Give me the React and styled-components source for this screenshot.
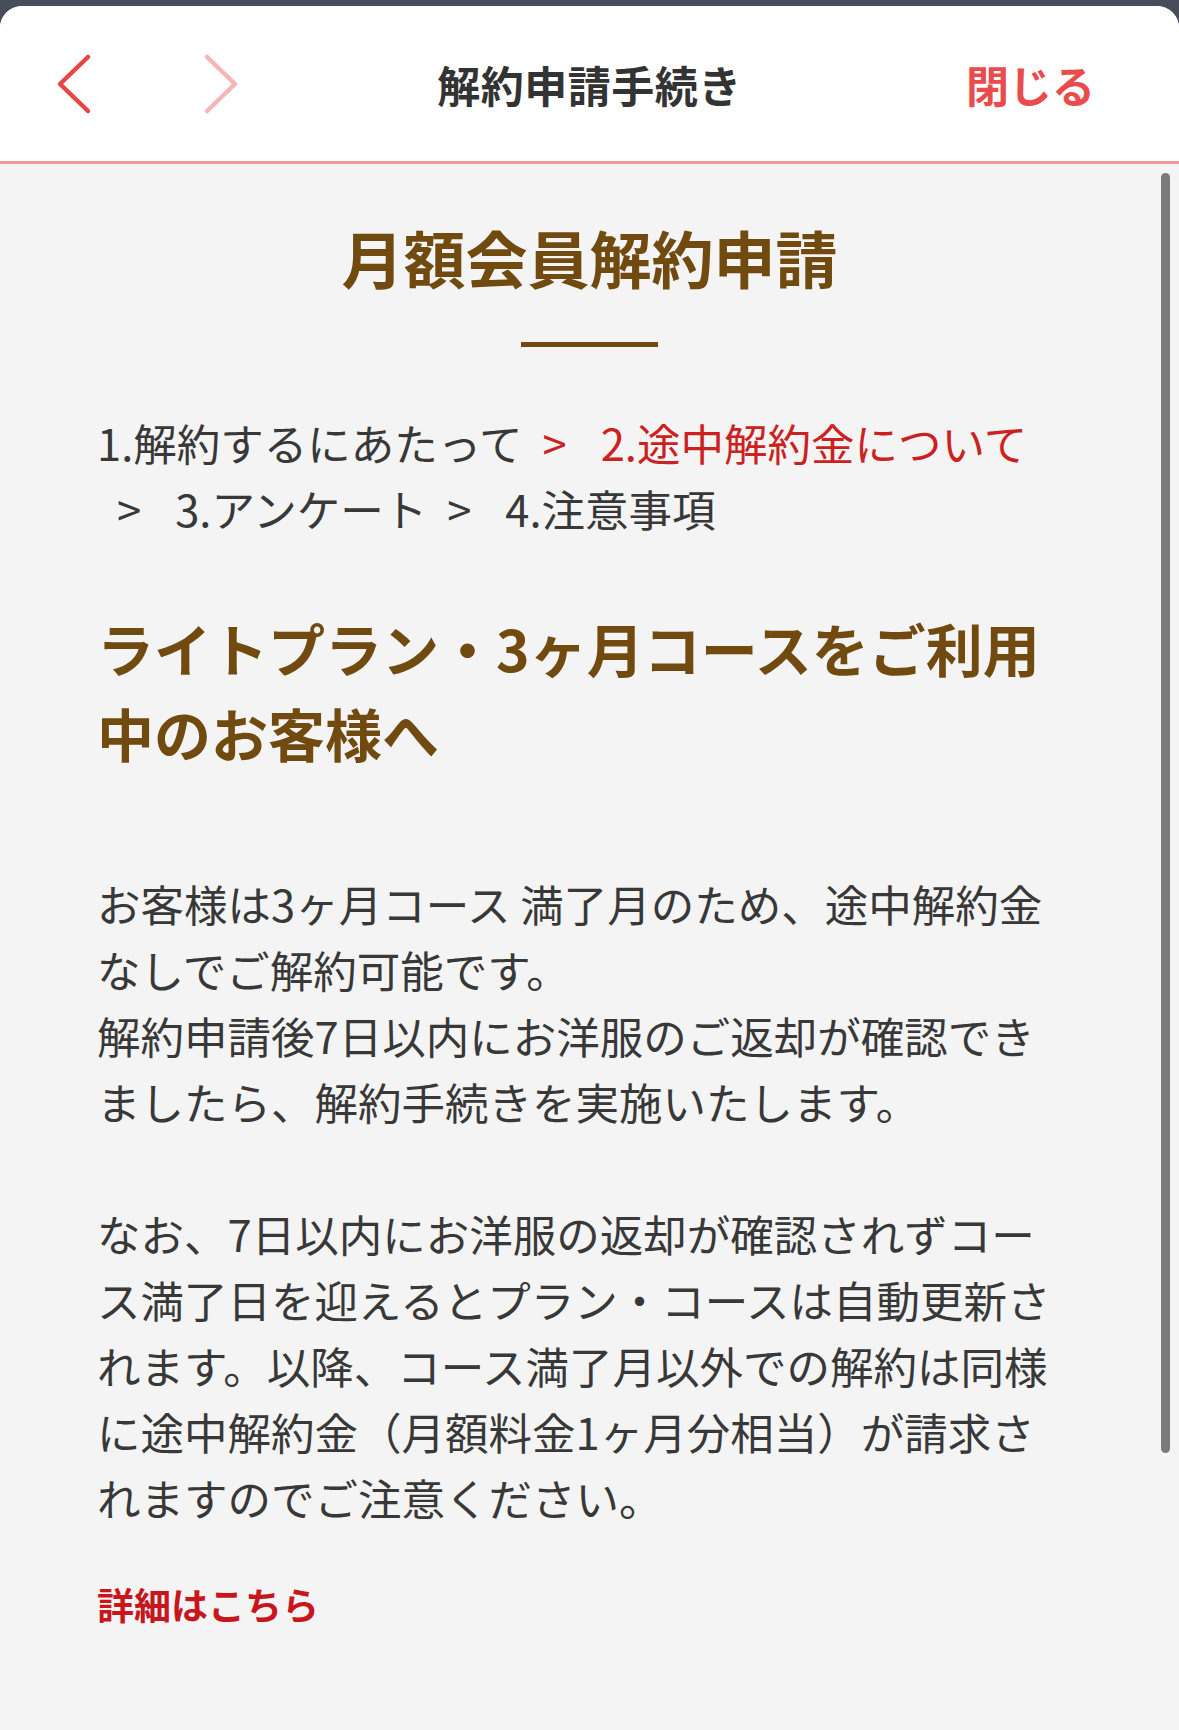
import React from 'react';
import styled, { createGlobalStyle } from 'styled-components';

const GlobalStyle = createGlobalStyle`
  html, body {
    margin: 0;
    padding: 0;
    background: #474e5a;
  }
  body {
    font-family: "Noto Sans CJK JP", "Noto Sans", sans-serif;
    color: #383838;
  }
  * { box-sizing: border-box; }
`;

const Sheet = styled.div`
  position: relative;
  margin-top: 6px;
  min-height: 1724px;
  background: #f4f4f4;
  border-radius: 22px 22px 0 0;
  overflow: hidden;
`;

const Header = styled.header`
  display: grid;
  grid-template-columns: 1fr auto 1fr;
  align-items: center;
  height: 158px;
  background: #fff;
  border-bottom: 3px solid #ef9a9d;
`;

const NavGroup = styled.div`
  display: flex;
  align-items: center;
  gap: 107px;
  padding-left: 54px;
`;

const NavButton = styled.button`
  display: flex;
  align-items: center;
  justify-content: center;
  width: 40px;
  height: 64px;
  padding: 0;
  border: none;
  background: none;
  color: ${p => (p.$disabled ? '#f7b6b6' : '#e84545')};
`;

const HeaderTitle = styled.h1`
  margin: 0;
  font-size: 43px;
  font-weight: 700;
  color: #333;
  letter-spacing: 0.5px;
`;

const CloseButton = styled.button`
  justify-self: end;
  margin-right: 84px;
  padding: 0;
  border: none;
  background: none;
  font-family: inherit;
  font-size: 43px;
  font-weight: 700;
  color: #ea4b4b;
`;

const Scrollbar = styled.div`
  position: absolute;
  top: 167px;
  right: 9px;
  width: 9px;
  height: 1280px;
  border-radius: 5px;
  background: #7b7b7b;
`;

const PageTitle = styled.h2`
  margin: 50px 0 0;
  text-align: center;
  font-size: 62px;
  line-height: 87px;
  font-weight: 700;
  color: #714a10;
`;

const Divider = styled.div`
  width: 137px;
  height: 5px;
  margin: 41px auto 0;
  background: #714a10;
`;

const Content = styled.div`
  padding: 63px 114px 60px 97px;
`;

const Steps = styled.nav`
  font-size: 43.5px;
  line-height: 66px;
`;

const Step = styled.span`
  display: inline-block;
  white-space: nowrap;
  color: ${p => (p.$current ? '#cc2121' : '#383838')};
`;

const Sep = styled.span`
  display: inline-block;
  padding: 0 34px 0 20px;
`;

const Heading = styled.h3`
  margin: 63px 0 0;
  font-size: 57px;
  line-height: 85px;
  font-weight: 700;
  color: #714a10;
`;

const Paragraph = styled.p`
  margin: 96px 0 0;
  font-size: 43.5px;
  line-height: 66px;
  color: #383838;
`;

const DetailLink = styled.a`
  display: block;
  margin-top: 46px;
  font-size: 37px;
  line-height: 54px;
  font-weight: 700;
  color: #c8161d;
  text-decoration: none;
`;

const Chevron = ({ dir }) => (
  <svg width="40" height="64" viewBox="0 0 40 64" fill="none">
    <path
      d={dir === 'left' ? 'M34 5 L6 32 L34 59' : 'M6 5 L34 32 L6 59'}
      stroke="currentColor"
      strokeWidth="4.5"
      strokeLinecap="round"
      strokeLinejoin="round"
    />
  </svg>
);

const steps = [
  { id: 1, label: '1.解約するにあたって' },
  { id: 2, label: '2.途中解約金について', current: true },
  { id: 3, label: '3.アンケート' },
  { id: 4, label: '4.注意事項' },
];

export default function App() {
  return (
    <>
      <GlobalStyle />
      <Sheet>
        <Header>
          <NavGroup>
            <NavButton aria-label="戻る">
              <Chevron dir="left" />
            </NavButton>
            <NavButton $disabled aria-label="進む">
              <Chevron dir="right" />
            </NavButton>
          </NavGroup>
          <HeaderTitle>解約申請手続き</HeaderTitle>
          <CloseButton>閉じる</CloseButton>
        </Header>

        <PageTitle>月額会員解約申請</PageTitle>
        <Divider />

        <Content>
          <Steps>
            {steps.map((s, i) => (
              <Step key={s.id} $current={s.current}>
                {i > 0 && <Sep>&gt;</Sep>}
                {s.label}
              </Step>
            ))}
          </Steps>

          <Heading>ライトプラン・3ヶ月コースをご利用中のお客様へ</Heading>

          <Paragraph>
            お客様は3ヶ月コース 満了月のため、途中解約金なしでご解約可能です。
            <br />
            解約申請後7日以内にお洋服のご返却が確認できましたら、解約手続きを実施いたします。
            <br />
            <br />
            なお、7日以内にお洋服の返却が確認されずコース満了日を迎えるとプラン・コースは自動更新されます。以降、コース満了月以外での解約は同様に途中解約金（月額料金1ヶ月分相当）が請求されますのでご注意ください。
          </Paragraph>

          <DetailLink href="#">詳細はこちら</DetailLink>
        </Content>
        <Scrollbar />
      </Sheet>
    </>
  );
}
